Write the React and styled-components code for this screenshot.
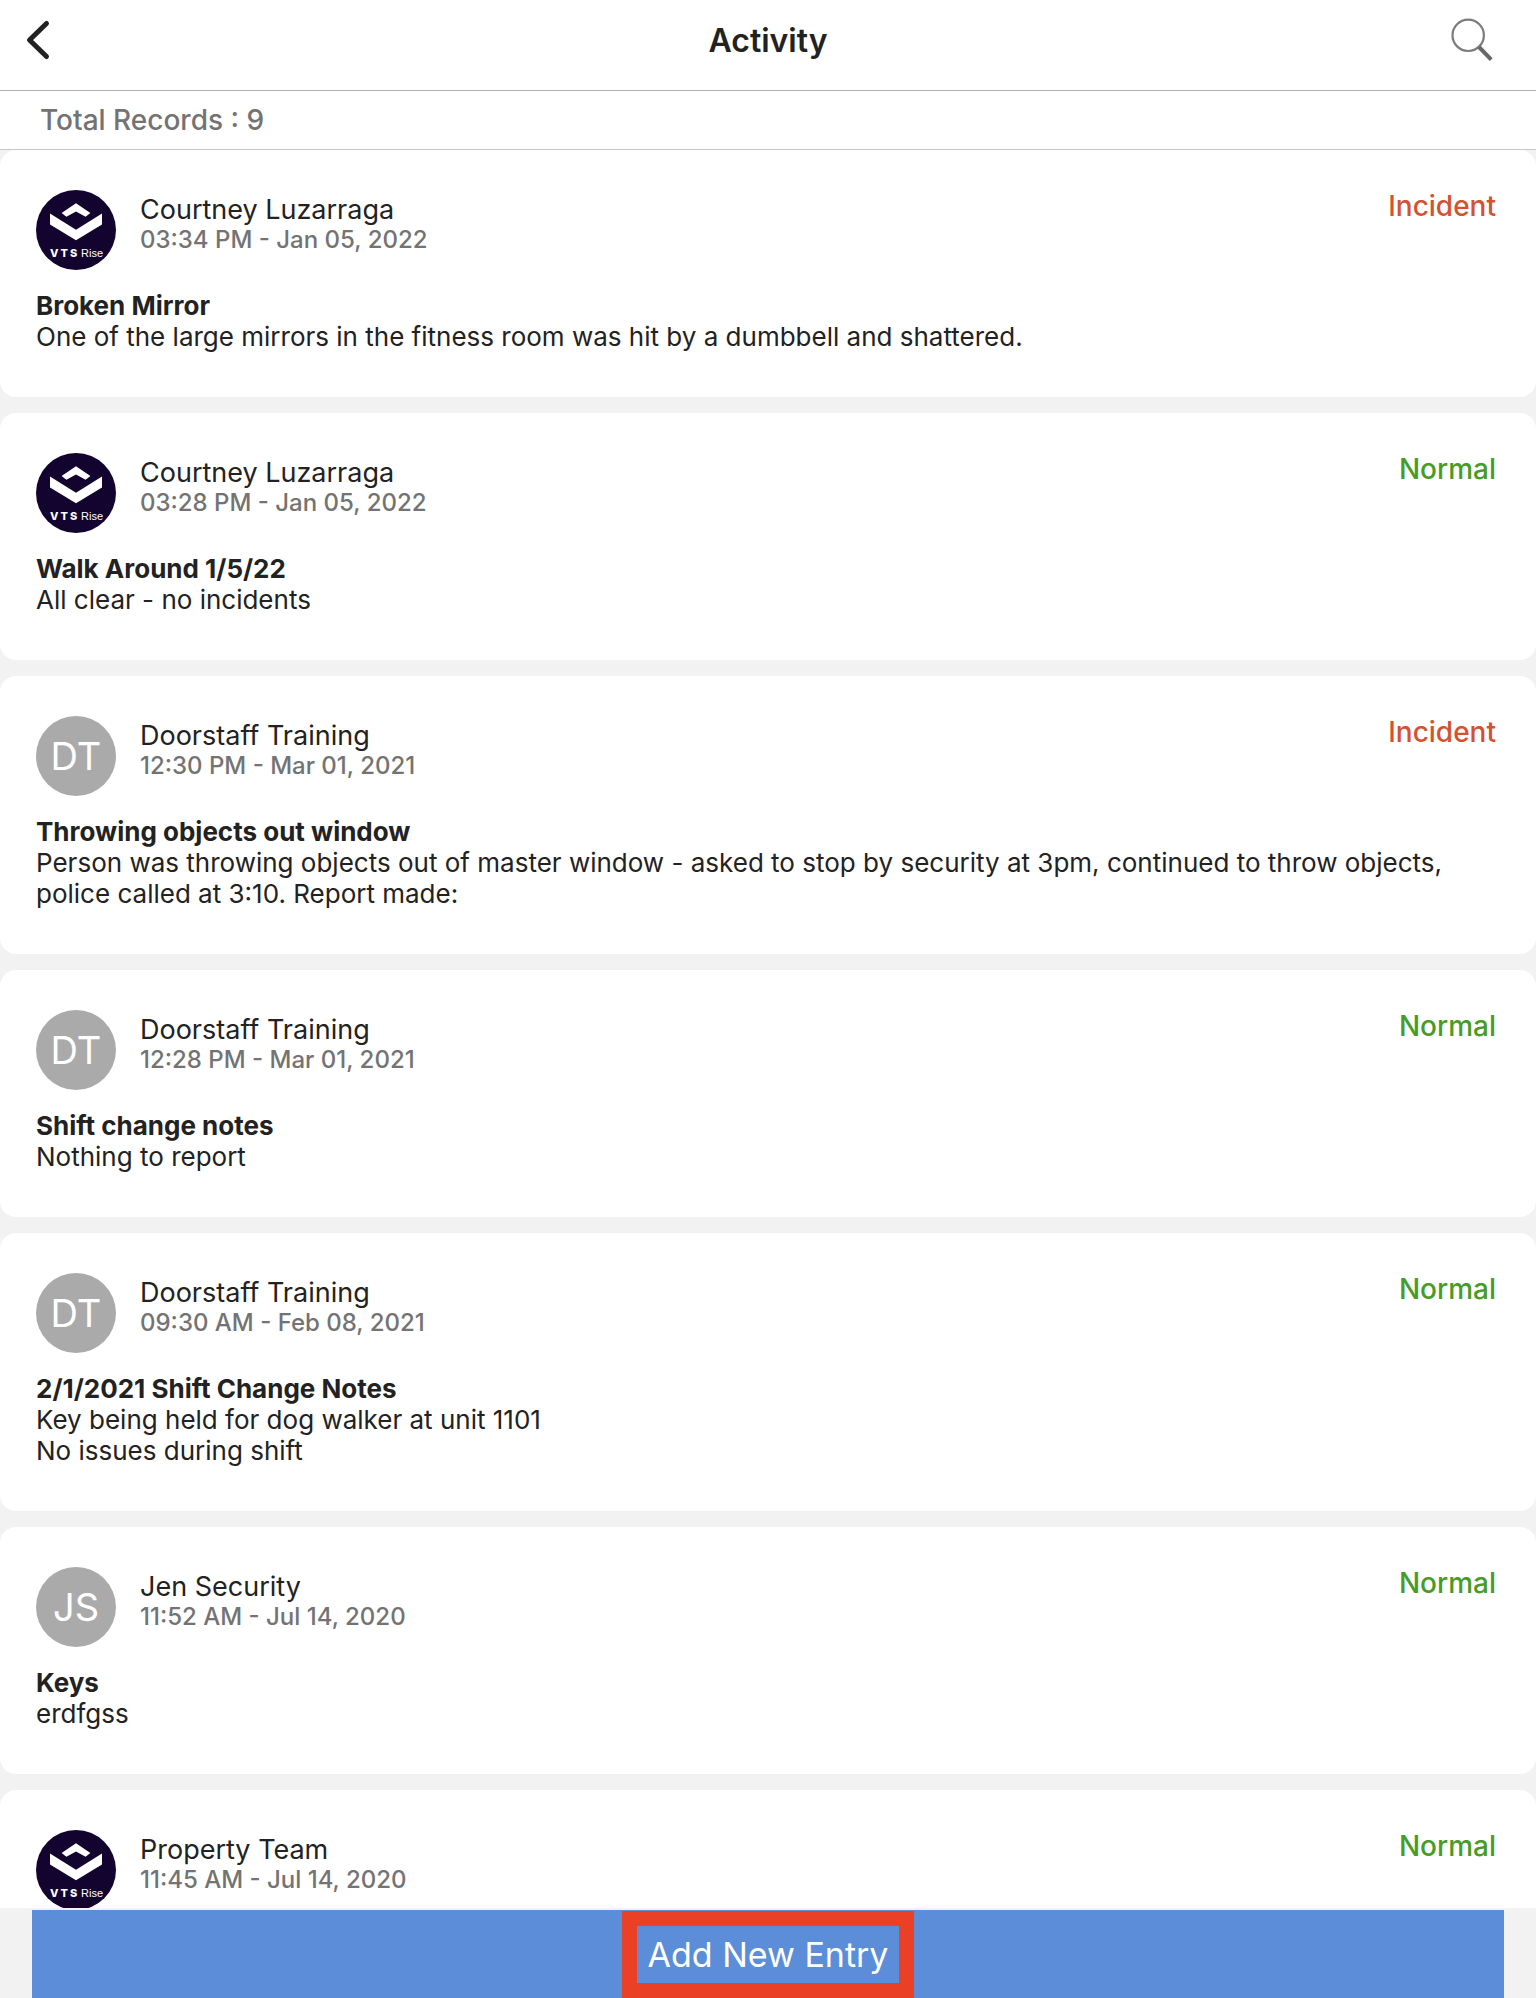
import React from "react";
import styled, { createGlobalStyle } from "styled-components";

const GlobalStyle = createGlobalStyle`
  *, *::before, *::after { box-sizing: border-box; }
  body {
    margin: 0;
    background: #f2f2f2;
    color: #222222;
    font-family: Inter, "Liberation Sans", sans-serif;
  }
  h1, h2, p, ul { margin: 0; padding: 0; }
  button { font: inherit; color: inherit; border: 0; padding: 0; background: none; cursor: pointer; }
`;

const Screen = styled.div`
  display: flex;
  flex-direction: column;
  height: 100vh;
  overflow: hidden;
`;

const Header = styled.header`
  display: grid;
  grid-template-columns: 1fr auto 1fr;
  align-items: center;
  padding: 16px 40px 24px 24px;
  background: #ffffff;
  border-bottom: 1px solid #b0b0b0;
`;

const PageTitle = styled.h1`
  padding-left: 16px;
  font-size: 32px;
  line-height: 50px;
  font-weight: 600;
`;

const IconButton = styled.button`
  display: flex;
  align-self: start;
  justify-self: ${(p) => p.$align};
`;

const RecordCount = styled.p`
  padding: 12px 40px;
  background: #ffffff;
  border-bottom: 1px solid #c8c8c8;
  color: #737373;
  font-size: 28px;
  line-height: 34px;
  font-weight: 500;
`;

const List = styled.ul`
  flex: 1;
  min-height: 0;
  display: flex;
  flex-direction: column;
  gap: 16px;
  overflow-y: auto;
  scrollbar-width: none;
  list-style: none;
`;

const Card = styled.li`
  flex: none;
  padding: 40px 40px 45px 36px;
  background: #ffffff;
  border-radius: 16px;
`;

const CardHead = styled.div`
  display: flex;
  align-items: flex-start;
  gap: 24px;
`;

const Initials = styled.span`
  flex: none;
  display: flex;
  align-items: center;
  justify-content: center;
  width: 80px;
  height: 80px;
  border-radius: 50%;
  background: #aaaaaa;
  color: #ffffff;
  font-size: 38px;
  line-height: 48px;
  font-weight: 400;
`;

const Author = styled.div`
  flex: 1;
  padding-top: 5px;
`;

const Name = styled.p`
  font-size: 27px;
  line-height: 30px;
`;

const Time = styled.p`
  color: #737373;
  font-size: 24px;
  line-height: 30px;
  font-weight: 500;
`;

const Status = styled.p`
  color: ${(p) => (p.$kind === "Incident" ? "#d4522f" : "#469c27")};
  font-size: 28px;
  line-height: 32px;
  font-weight: 500;
`;

const CardBody = styled.div`
  padding-top: 20px;
  font-size: 26px;
  line-height: 31px;
  white-space: pre-line;
`;

const EntryTitle = styled.h2`
  font-size: 26px;
  line-height: 31px;
  font-weight: 700;
`;

const Footer = styled.footer`
  padding: 2px 32px 0;
  background: #f2f2f2;
`;

const AddButton = styled.button`
  display: flex;
  justify-content: center;
  width: 100%;
  padding-top: 1px;
  background: #5b8dd9;
  color: #ffffff;
`;

const Highlight = styled.span`
  padding: 9px 11px 8px;
  border: 15px solid #ea4025;
  font-size: 34px;
  line-height: 40px;
`;

const LogoSvg = styled.svg`
  flex: none;
  display: block;
  font-family: "Liberation Sans", Arial, sans-serif;
  font-size: 11px;
`;

const LogoBold = styled.text`
  font-family: Inter, "Liberation Sans", sans-serif;
  font-weight: 800;
  letter-spacing: 2px;
`;

const records = [
  { who: "Courtney Luzarraga", time: "03:34 PM - Jan 05, 2022", kind: "Incident", title: "Broken Mirror", text: "One of the large mirrors in the fitness room was hit by a dumbbell and shattered." },
  { who: "Courtney Luzarraga", time: "03:28 PM - Jan 05, 2022", kind: "Normal", title: "Walk Around 1/5/22", text: "All clear - no incidents" },
  { who: "Doorstaff Training", initials: "DT", time: "12:30 PM - Mar 01, 2021", kind: "Incident", title: "Throwing objects out window", text: "Person was throwing objects out of master window - asked to stop by security at 3pm, continued to throw objects, police called at 3:10. Report made:" },
  { who: "Doorstaff Training", initials: "DT", time: "12:28 PM - Mar 01, 2021", kind: "Normal", title: "Shift change notes", text: "Nothing to report" },
  { who: "Doorstaff Training", initials: "DT", time: "09:30 AM - Feb 08, 2021", kind: "Normal", title: "2/1/2021 Shift Change Notes", text: "Key being held for dog walker at unit 1101\nNo issues during shift" },
  { who: "Jen Security", initials: "JS", time: "11:52 AM - Jul 14, 2020", kind: "Normal", title: "Keys", text: "erdfgss" },
  { who: "Property Team", time: "11:45 AM - Jul 14, 2020", kind: "Normal" },
];

function Logo() {
  return (
    <LogoSvg width="80" height="80" viewBox="0 0 80 80" fill="#ffffff" aria-hidden="true">
      <circle cx="40" cy="40" r="40" fill="#12032f" />
      <path d="M40 13.2 54.4 23 49.6 26.8 40 21.6 30.4 26.8 25.6 23Z" />
      <path d="M14 23.6 40 39.7 66 23.6V34.4L40 50.2 14 34.4Z" />
      <LogoBold x="14" y="67">VTS</LogoBold>
      <text x="45" y="67">Rise</text>
    </LogoSvg>
  );
}

function Record({ who, initials, time, kind, title, text }) {
  return (
    <Card>
      <CardHead>
        {initials ? <Initials>{initials}</Initials> : <Logo />}
        <Author>
          <Name>{who}</Name>
          <Time>{time}</Time>
        </Author>
        <Status $kind={kind}>{kind}</Status>
      </CardHead>
      {title && (
        <CardBody>
          <EntryTitle>{title}</EntryTitle>
          <p>{text}</p>
        </CardBody>
      )}
    </Card>
  );
}

export default function App() {
  return (
    <Screen>
      <GlobalStyle />
      <Header>
        <IconButton $align="start" type="button" aria-label="Back">
          <svg width="28" height="48" viewBox="0 0 28 48" fill="none" stroke="#222222" strokeWidth="5" strokeLinecap="round" strokeLinejoin="round">
            <path d="M22.5 7.5 5.5 24l17 16.5" />
          </svg>
        </IconButton>
        <PageTitle>Activity</PageTitle>
        <IconButton $align="end" type="button" aria-label="Search">
          <svg width="48" height="48" viewBox="0 0 48 48" fill="none" stroke="#7c7c7c">
            <circle cx="20.2" cy="19.3" r="15.7" strokeWidth="2.2" />
            <path d="M31 31 43.2 43.6" stroke="#686868" strokeWidth="4" />
          </svg>
        </IconButton>
      </Header>
      <RecordCount>Total Records : 9</RecordCount>
      <List>
        {records.map((r) => (
          <Record key={r.time} {...r} />
        ))}
      </List>
      <Footer>
        <AddButton type="button">
          <Highlight>Add New Entry</Highlight>
        </AddButton>
      </Footer>
    </Screen>
  );
}
